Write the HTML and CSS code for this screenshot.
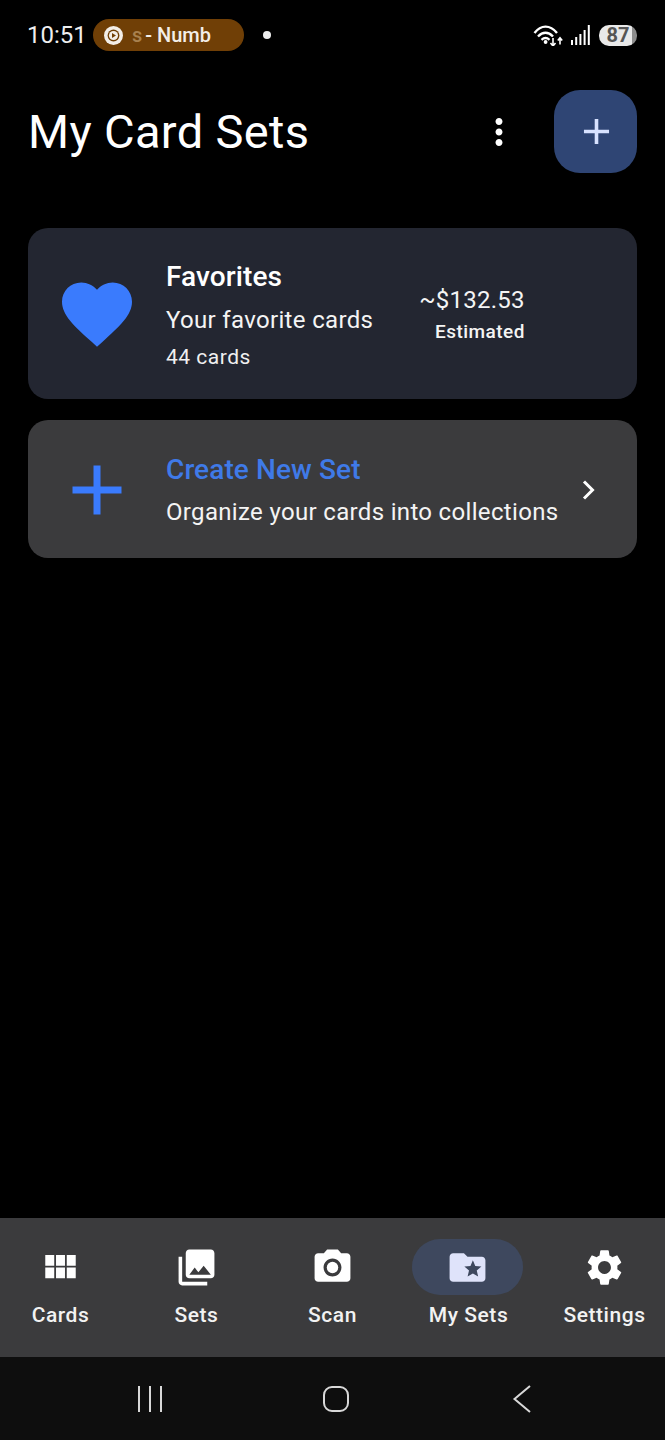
FILE: index.html
```html
<!DOCTYPE html>
<html lang="en">
<head>
<meta charset="utf-8">
<title>My Card Sets</title>
<link rel="stylesheet" href="styles.css">
</head>
<body>
<div class="screen">
  <header class="status">
    <span class="time">10:51</span>
    <div class="media">
      <svg class="media-icon" viewBox="0 0 20 20"><circle cx="10" cy="10" r="10" class="f-light"/><circle cx="10" cy="10" r="6.2" class="f-brown"/><circle cx="10" cy="10" r="4.8" class="f-light"/><path d="M8.4 7.4v5.2l4.2-2.6z" class="f-brown"/></svg>
      <span class="media-text"><span class="fade">s</span> - Numb</span>
    </div>
    <span class="notif-dot"></span>
    <div class="status-right">
      <svg class="wifi" viewBox="0 -1 30 22"><path d="M1.500 8C8 -.5 17 -.5 24 8M5 11.500c4.800-5 10.200-5 15 0M8.500 14.800c2.800-2.400 5.200-2.400 8 0" class="s-wifi"/><circle cx="12.600" cy="17" r="1.900" class="f-white"/><path d="M20 13v8M17.500 18l2.500 3 2.500-3M27 19.500v-6.500M24.800 15.500l2.200-2.700 2.200 2.700" class="s-arrows"/></svg>
      <svg class="signal" viewBox="0 0 20 20"><path d="M1 15h2v5H1zM5.200 12h2v8h-2zM9.400 9h2v11h-2zM13.600 5h2v15h-2zM17.800 0h2v20h-2z" class="f-white"/></svg>
      <div class="battery"><span class="battery-text">87</span></div>
    </div>
  </header>

  <section class="title-row">
    <h1 class="title">My Card Sets</h1>
    <svg class="more" viewBox="0 0 24 24"><path d="M12 8c1.100 0 2-.9 2-2s-.9-2-2-2-2 .9-2 2 .9 2 2 2zm0 2c-1.100 0-2 .9-2 2s.9 2 2 2 2-.9 2-2-.9-2-2-2zm0 6c-1.100 0-2 .9-2 2s.9 2 2 2 2-.9 2-2-.9-2-2-2z" class="f-white"/></svg>
    <button class="fab"><svg class="fab-icon" viewBox="0 0 24 24"><path d="M19 13h-6v6h-2v-6H5v-2h6V5h2v6h6v2z"/></svg></button>
  </section>

  <main class="list">
    <article class="card card-fav">
      <svg class="card-icon" viewBox="0 0 24 24"><path d="M12 21.350l-1.450-1.320C5.400 15.360 2 12.280 2 8.500 2 5.420 4.420 3 7.500 3c1.740 0 3.410.81 4.500 2.090C13.090 3.810 14.760 3 16.500 3 19.580 3 22 5.420 22 8.500c0 3.780-3.400 6.860-8.550 11.540L12 21.350z"/></svg>
      <div class="card-body">
        <div class="card-title">Favorites</div>
        <div class="card-sub sub-fav">Your favorite cards</div>
        <div class="card-count">44 cards</div>
      </div>
      <div class="price">
        <div class="price-value">~$132.53</div>
        <div class="price-label">Estimated</div>
      </div>
    </article>
    <article class="card card-new">
      <svg class="card-icon" viewBox="0 0 24 24"><path d="M19 13h-6v6h-2v-6H5v-2h6V5h2v6h6v2z"/></svg>
      <div class="card-body">
        <div class="card-title title-new">Create New Set</div>
        <div class="card-sub sub-new">Organize your cards into collections</div>
      </div>
      <svg class="chevron" viewBox="0 0 14 20"><path d="M2 1.500l8.500 8.500L2 18.500"/></svg>
    </article>
  </main>

  <nav class="tabs">
    <div class="tab">
      <div class="tab-icon-wrap"><svg class="tab-icon" viewBox="0.5 0 24 24"><path d="M4 11h5V5H4v6zm0 7h5v-6H4v6zm6 0h5v-6h-5v6zm6 0h5v-6h-5v6zm-6-7h5V5h-5v6zm6-6v6h5V5h-5z"/></svg></div>
      <span class="tab-label">Cards</span>
    </div>
    <div class="tab">
      <div class="tab-icon-wrap"><svg class="tab-icon" viewBox="0 0 24 24"><path d="M22 16V4c0-1.100-.9-2-2-2H8c-1.100 0-2 .9-2 2v12c0 1.100.9 2 2 2h12c1.100 0 2-.9 2-2zm-11-4l2.030 2.710L16 11l4 5H8l3-4zM2 6v14c0 1.100.9 2 2 2h14v-2H4V6H2z"/></svg></div>
      <span class="tab-label">Sets</span>
    </div>
    <div class="tab">
      <div class="tab-icon-wrap"><svg class="tab-icon" viewBox="0 0 24 24"><circle cx="12" cy="12" r="3.200"/><path d="M9 2L7.170 4H4c-1.100 0-2 .9-2 2v12c0 1.100.9 2 2 2h16c1.100 0 2-.9 2-2V6c0-1.100-.9-2-2-2h-3.170L15 2H9zm3 15c-2.760 0-5-2.240-5-5s2.240-5 5-5 5 2.240 5 5-2.240 5-5 5z"/></svg></div>
      <span class="tab-label">Scan</span>
    </div>
    <div class="tab">
      <div class="tab-icon-wrap tab-active"><svg class="tab-icon icon-active" viewBox="0 0 24 24"><path d="M20 6h-8l-2-2H4c-1.100 0-1.990.9-1.990 2L2 18c0 1.100.9 2 2 2h16c1.100 0 2-.9 2-2V8c0-1.100-.9-2-2-2zm-2.060 11L15 15.280 12.060 17l.78-3.330-2.590-2.240 3.410-.29L15 8l1.340 3.140 3.410.29-2.590 2.240.78 3.330z"/></svg></div>
      <span class="tab-label">My Sets</span>
    </div>
    <div class="tab">
      <div class="tab-icon-wrap"><svg class="tab-icon" viewBox="0 0 24 24"><path d="M19.140 12.940c.04-.3.06-.61.06-.94 0-.32-.02-.64-.07-.94l2.030-1.580c.18-.14.23-.41.12-.61l-1.920-3.320c-.12-.22-.37-.29-.59-.22l-2.390.96c-.5-.38-1.030-.7-1.620-.94l-.36-2.540c-.04-.24-.24-.41-.48-.41h-3.840c-.24 0-.43.17-.47.41l-.36 2.540c-.59.24-1.130.57-1.620.94l-2.390-.96c-.22-.08-.47 0-.59.22L2.740 8.870c-.12.21-.08.47.12.61l2.030 1.580c-.05.3-.09.63-.09.94s.02.64.07.94l-2.030 1.580c-.18.14-.23.41-.12.61l1.920 3.320c.12.22.37.29.59.22l2.390-.96c.5.38 1.030.7 1.620.94l.36 2.540c.05.24.24.41.48.41h3.840c.24 0 .44-.17.47-.41l.36-2.540c.59-.24 1.130-.56 1.620-.94l2.390.96c.22.08.47 0 .59-.22l1.920-3.320c.12-.22.07-.47-.12-.61l-2.010-1.580zM12 15.600c-1.980 0-3.600-1.620-3.600-3.600s1.620-3.600 3.600-3.600 3.600 1.620 3.600 3.600-1.620 3.600-3.600 3.600z"/></svg></div>
      <span class="tab-label">Settings</span>
    </div>
  </nav>

  <footer class="sysnav">
    <svg class="sys-icon" viewBox="0 0 26 28"><path d="M2 1v26M13 1v26M24 1v26"/></svg>
    <svg class="sys-icon" viewBox="0 0 28 28"><rect x="2" y="2" width="24" height="24" rx="8"/></svg>
    <svg class="sys-icon" viewBox="0 0 20 28"><path d="M18 1L2.500 14 18 27"/></svg>
  </footer>
</div>
</body>
</html>
```
FILE: styles.css
```css
* { box-sizing: border-box; }
html, body { margin: 0; padding: 0; background: #000; }
body { font-family: Roboto, "Liberation Sans", sans-serif; color: #fff; }
.screen { width: 665px; height: 1440px; display: flex; flex-direction: column; background: #000; overflow: hidden; }

.status { height: 70px; flex: none; display: flex; align-items: center; padding: 0 28px 0 27px; }
.time { font-size: 24px; color: #eee; width: 66px; }
.media { width: 151px; height: 32px; border-radius: 16px; background: #703f06; display: flex; align-items: center; padding-left: 11px; gap: 9px; }
.media-icon { width: 19px; height: 19px; flex: none; }
.media-text { font-size: 20px; font-weight: 500; color: #f3eee8; white-space: nowrap; }
.fade { color: #a8814f; margin-right: -2px; }
.notif-dot { width: 8px; height: 8px; border-radius: 50%; background: #eee; margin-left: 19px; }
.status-right { margin-left: auto; display: flex; align-items: center; }
.wifi { width: 30px; height: 22px; }
.signal { width: 20px; height: 20px; margin-left: 7px; }
.battery { width: 38px; height: 21px; margin-left: 9px; border-radius: 10px; background: linear-gradient(90deg, #e9e9e9 0 87%, #8d8d8d 87% 100%); display: flex; align-items: center; justify-content: center; }
.battery-text { font-size: 20px; font-weight: 700; color: #555; line-height: 21px; }
.f-light { fill: #f3eee8; }
.f-brown { fill: #703f06; }
.f-white { fill: #fff; }
.s-wifi { fill: none; stroke: #fff; stroke-width: 2.400; }
.s-arrows { fill: none; stroke: #fff; stroke-width: 1.600; }

.title-row { flex: none; display: flex; align-items: center; padding: 20px 28px 0; }
.title { flex: 1; margin: 0; font-size: 47px; font-weight: 400; line-height: 83px; letter-spacing: .35px; color: #fff; }
.more { width: 42px; height: 42px; margin-right: 34px; }
.fab { width: 83px; height: 83px; padding: 0 0 0 2px; border: 0; border-radius: 26px; background: #2f4574; display: flex; align-items: center; justify-content: center; }
.fab-icon { width: 43px; height: 43px; fill: #d8e2ff; }

.list { flex: 1; display: flex; flex-direction: column; gap: 21px; padding: 55px 28px 0; }
.card { display: flex; align-items: center; border-radius: 20px; padding: 33px 0 28px 27px; }
.card-fav { background: #232631; }
.card-new { background: #3b3b3d; padding-top: 34px; }
.card-icon { width: 84px; height: 84px; flex: none; fill: #3a7bfd; margin: -10px 27px -5px 0; }
.card-body { display: flex; flex-direction: column; flex: none; }
.card-title { font-size: 28px; font-weight: 500; line-height: 32px; letter-spacing: .1px; color: #fff; }
.title-new { color: #3f7ae8; }
.card-sub { font-size: 24px; line-height: 36px; letter-spacing: .33px; color: #f4f4f4; }
.sub-fav { margin-top: 9px; }
.sub-new { margin-top: 8px; }
.card-count { font-size: 21px; line-height: 28px; margin-top: 5px; letter-spacing: .5px; color: #f0f0f0; }
.price { margin-left: 46px; display: flex; flex-direction: column; align-items: flex-end; margin-top: -4px; }
.price-value { font-size: 24px; line-height: 32px; letter-spacing: .25px; color: #f4f4f4; }
.price-label { font-size: 19px; font-weight: 500; line-height: 26px; margin-top: 3px; letter-spacing: .45px; color: #f4f4f4; }
.chevron { width: 14px; height: 20px; margin-left: 24px; margin-top: -5px; fill: none; stroke: #fff; stroke-width: 3; }

.tabs { height: 139px; flex: none; display: flex; justify-content: space-between; background: #3b3b3d; padding-top: 21px; }
.tab { width: 121px; display: flex; flex-direction: column; align-items: center; }
.tab-icon-wrap { width: 111px; height: 56px; border-radius: 28px; display: flex; align-items: center; justify-content: center; }
.tab-active { background: #3e485e; margin-right: 2px; }
.tab-icon { width: 43px; height: 43px; fill: #fff; }
.icon-active { fill: #dfe3fa; }
.tab-label { font-size: 21px; font-weight: 500; line-height: 28px; margin-top: 6px; letter-spacing: .55px; color: #f2f2f2; white-space: nowrap; }

.sysnav { height: 83px; flex: none; background: #0e0e0e; display: grid; grid-template-columns: repeat(3, 186px); justify-items: center; align-items: center; padding-left: 57px; }
.sys-icon { height: 28px; width: auto; fill: none; stroke: #d8d8d8; stroke-width: 2; }
```
